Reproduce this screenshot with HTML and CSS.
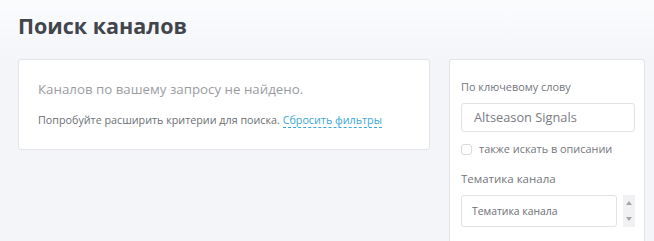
FILE: index.html
```html
<!DOCTYPE html>
<html lang="ru">
<head>
<meta charset="utf-8">
<link rel="stylesheet" href="styles.css">
</head>
<body>
<div class="page">
  <h1 class="title">Поиск каналов</h1>
  <div class="layout">
    <div class="results">
      <p class="empty">Каналов по вашему запросу не найдено.</p>
      <p class="hint">Попробуйте расширить критерии для поиска. <a class="reset" href="#">Сбросить фильтры</a></p>
    </div>
    <aside class="filters">
      <label class="flabel">По ключевому слову</label>
      <div class="input">Altseason Signals</div>
      <div class="check"><span class="box"></span><span class="check-text">также искать в описании</span></div>
      <label class="flabel topic">Тематика канала</label>
      <div class="select-row">
        <div class="select">Тематика канала</div>
        <div class="scroll"><span class="up"></span><span class="down"></span></div>
      </div>
    </aside>
  </div>
</div>
</body>
</html>
```
FILE: styles.css
```css
html, body { margin: 0; padding: 0; }
body {
  background: linear-gradient(#fbfcfe 0, #f4f5f9 60px, #f4f5f9 100%);
  font-family: "Open Sans", sans-serif;
  height: 241px;
  overflow: hidden;
}
.page { padding: 12px 8px 0 18px; }
.title {
  margin: 0;
  font-size: 21.5px;
  font-weight: 700;
  color: #42454c;
  line-height: 28px;
  height: 47px;
}
.layout { display: flex; gap: 19px; align-items: flex-start; }
.results {
  width: 410px;
  height: 89px;
  background: #fff;
  border: 1px solid #e2e4e9;
  border-radius: 3px;
}
.empty {
  margin: 20px 0 0 19px;
  font-size: 13.3px;
  color: #9a9ca2;
  line-height: 18px;
}
.hint {
  margin: 14px 0 0 19px;
  font-size: 10.75px;
  color: #6d6f75;
  line-height: 16px;
}
.reset {
  color: #3ba7d7;
  text-decoration: none;
  border-bottom: 1px dashed #3ba7d7;
}
.filters {
  width: 196px;
  height: 182px;
  background: #fff;
  border: 1px solid #e2e4e9;
  border-bottom: 0;
  border-radius: 3px 3px 0 0;
  padding: 20px 0 0 11px;
  box-sizing: border-box;
  display: flex;
  flex-direction: column;
}
.flabel { font-size: 10.9px; color: #74767c; line-height: 14px; }
.input {
  margin-top: 9px;
  width: 174px;
  height: 29px;
  box-sizing: border-box;
  border: 1px solid #e0e2e6;
  border-radius: 3px;
  padding-left: 12px;
  font-size: 12.8px;
  color: #7a7c82;
  line-height: 27px;
}
.check { display: flex; align-items: center; margin-top: 11px; height: 12px; }
.box {
  width: 11px; height: 11px;
  border: 1px solid #d8dadf;
  border-radius: 3px;
  box-sizing: border-box;
}
.check-text { margin-left: 7px; font-size: 10.9px; color: #74767c; line-height: 12px; }
.topic { margin-top: 17px; font-size: 11.5px; }
.select-row { display: flex; margin-top: 9px; gap: 6px; }
.select {
  width: 156px;
  height: 32px;
  box-sizing: border-box;
  border: 1px solid #e0e2e6;
  border-radius: 3px;
  padding-left: 10px;
  font-size: 10.4px;
  color: #6d6f75;
  line-height: 30px;
}
.scroll {
  width: 12px;
  height: 32px;
  background: #f1f1f3;
  display: flex;
  flex-direction: column;
  justify-content: space-between;
  align-items: center;
  padding: 6px 0;
  box-sizing: border-box;
}
.up { width: 0; height: 0; border-left: 3px solid transparent; border-right: 3px solid transparent; border-bottom: 4px solid #a3a5aa; }
.down { width: 0; height: 0; border-left: 3px solid transparent; border-right: 3px solid transparent; border-top: 4px solid #a3a5aa; }
```
